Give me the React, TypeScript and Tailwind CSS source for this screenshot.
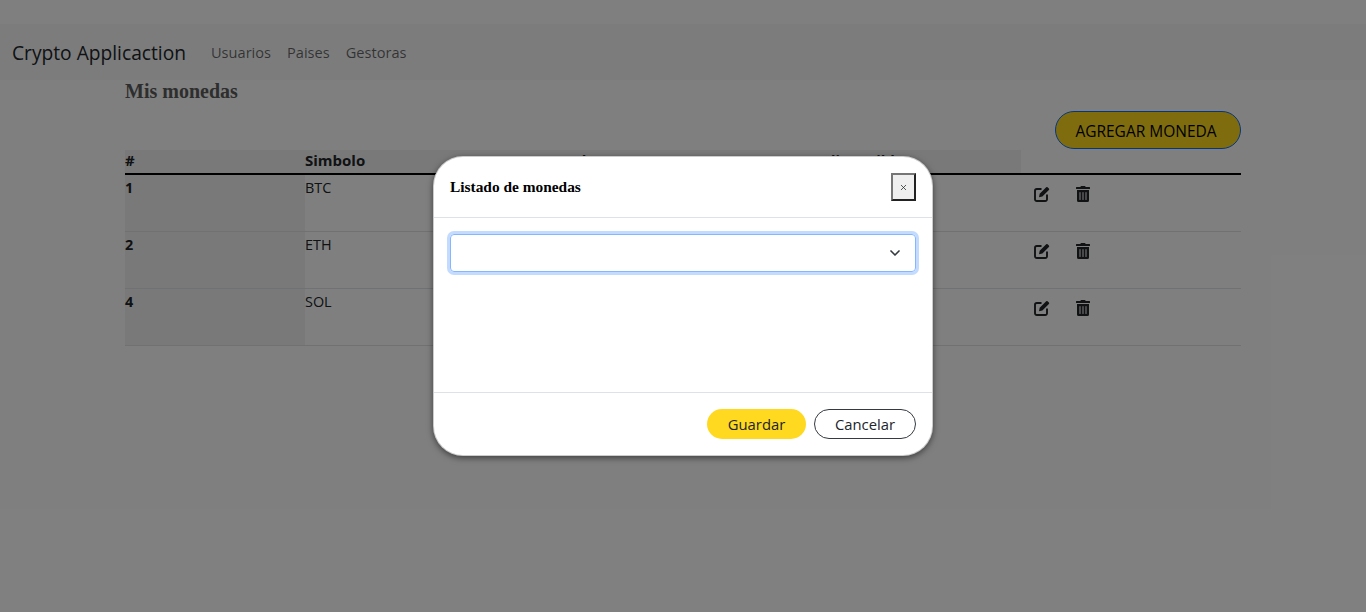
import React from "react";
import { FaTrashAlt } from "react-icons/fa";
import { ChevronDown, X } from "lucide-react";

const rows = [
  { id: 1, simbolo: "BTC" },
  { id: 2, simbolo: "ETH" },
  { id: 4, simbolo: "SOL" },
];

const EditIcon = () => (
  <svg width="16" height="16" viewBox="0 0 16 16" fill="none">
    <path
      d="M7.5 3H2.8A1.8 1.8 0 0 0 1 4.8v8.4A1.8 1.8 0 0 0 2.8 15h8.4a1.8 1.8 0 0 0 1.8-1.8V8.5"
      stroke="currentColor"
      strokeWidth="1.9"
    />
    <path
      d="M5 11.2l.7-3.4L12.2 1.3a1 1 0 0 1 1.4 0l1.3 1.3a1 1 0 0 1 0 1.4L8.4 10.5z"
      fill="currentColor"
    />
  </svg>
);

const App: React.FC = () => {
  return (
    <div className="relative h-[612px] overflow-hidden bg-white font-['Open_Sans','Noto_Sans',sans-serif] text-[#212529]">
      <nav className="mt-6 flex h-14 items-center bg-[#f8f9fa] pt-[2px] pl-3">
        <span className="mr-[25px] text-[19.2px] leading-none">Crypto Applicaction</span>
        <div className="flex gap-4 text-[14.6px] text-[#00000099]">
          <span>Usuarios</span>
          <span>Paises</span>
          <span>Gestoras</span>
        </div>
      </nav>

      <main className="mx-[125px]">
        <h2 className="font-['Liberation_Serif',serif] text-[20px] leading-[23px] font-bold text-[#5c5c5c]">Mis monedas</h2>
        <div className="mt-2 flex justify-end">
          <button className="h-[38px] w-[186px] rounded-full border border-[#0d6efd] bg-[#ffd91f] pt-[3px] pr-1 text-[15.5px] font-medium text-black">
            AGREGAR MONEDA
          </button>
        </div>
        <table className="mt-px w-full table-fixed text-left text-[14.4px]">
          <thead>
            <tr className="h-[24px] border-b-2 border-black text-[15px]">
              <th className="w-[180px] bg-[#f2f2f2] align-top leading-[20px] font-bold">#</th>
              <th className="w-[258px] bg-[#f2f2f2] align-top leading-[20px] font-bold">Simbolo</th>
              <th className="w-[263px] bg-[#f2f2f2] align-top leading-[20px] font-bold">Valor</th>
              <th className="w-[195px] bg-[#f2f2f2] align-top leading-[20px] font-bold">disponible</th>
              <th></th>
            </tr>
          </thead>
          <tbody>
            {rows.map((row) => (
              <tr key={row.id} className="h-[57px] border-b border-[#dee2e6] align-top">
                <td className="bg-[#f2f2f2] pt-[2px] font-bold">{row.id}</td>
                <td className="pt-[2px]">{row.simbolo}</td>
                <td></td>
                <td></td>
                <td>
                  <div className="flex items-center gap-[25px] pt-[11px] pl-[13px] text-[16px] text-[#212529]">
                    <EditIcon />
                    <FaTrashAlt />
                  </div>
                </td>
              </tr>
            ))}
          </tbody>
        </table>
      </main>

      <div className="absolute inset-0 bg-black/50"></div>

      <div className="absolute top-[156px] left-[433px] flex h-[300px] w-[500px] flex-col rounded-[30px] border border-black/20 bg-white shadow-[0_2px_6px_rgba(0,0,0,0.5)]">
        <div className="flex h-[61px] items-center justify-between border-b border-[#dee2e6] px-4">
          <h5 className="font-['Liberation_Serif',serif] text-[15.4px] font-bold text-black">Listado de monedas</h5>
          <button className="flex h-[28px] w-[25px] items-center justify-center border-2 border-t-[#767676] border-r-[#222] border-b-[#222] border-l-[#767676] bg-[#efefef]">
            <X size={9} />
          </button>
        </div>
        <div className="flex-1 p-4">
          <div className="flex h-[38px] items-center justify-end rounded border border-[#86b7fe] pr-[12px] shadow-[0_0_0_3px_rgba(13,110,253,0.25)]">
            <ChevronDown size={16} strokeWidth={2.5} className="text-[#343a40]" />
          </div>
        </div>
        <div className="flex h-[63px] items-start justify-end gap-2 border-t border-[#dee2e6] px-4 pt-4">
          <button className="h-[30px] w-[99px] rounded-full bg-[#ffd91f] text-[14.8px]">Guardar</button>
          <button className="h-[30px] w-[102px] rounded-full border border-[#343a40] text-[14.8px]">Cancelar</button>
        </div>
      </div>
    </div>
  );
};

export default App;
